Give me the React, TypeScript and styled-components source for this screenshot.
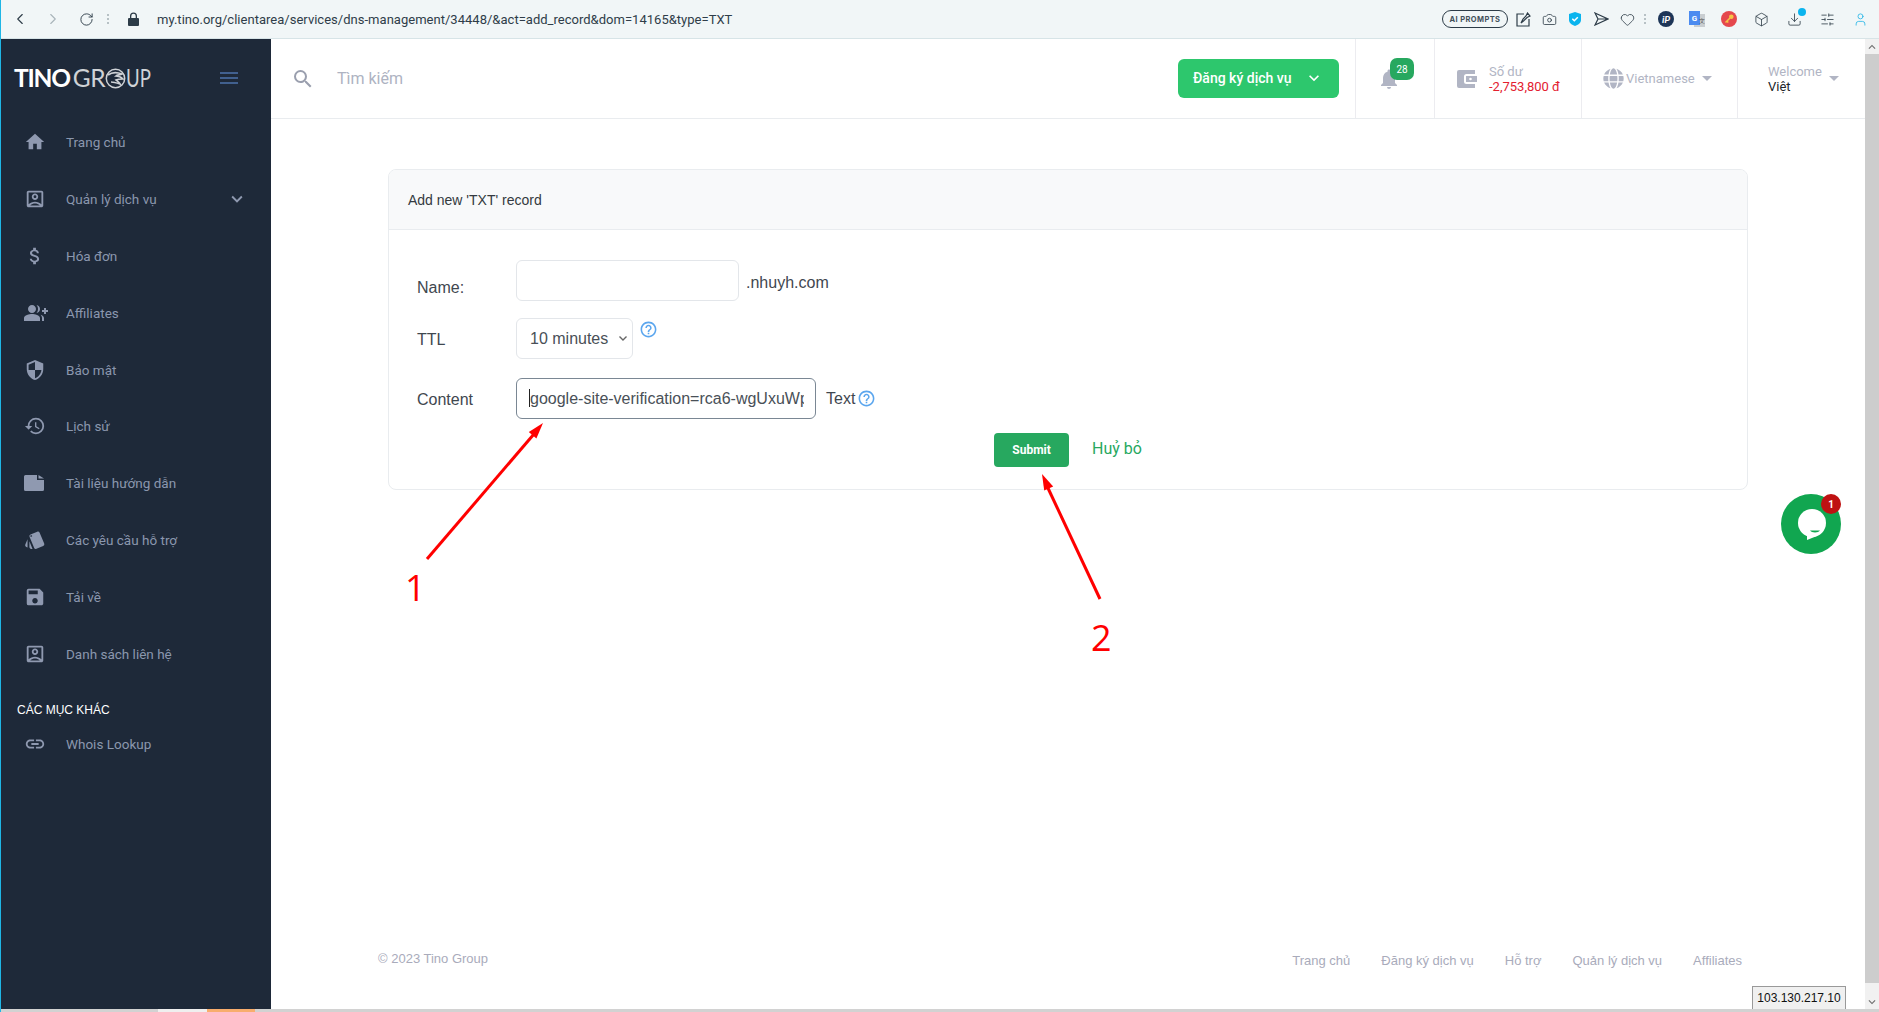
import React from "react";
import styled, { createGlobalStyle } from "styled-components";
import {
  MdHome, MdOutlineAccountBox, MdAttachMoney, MdGroupAdd, MdSecurity, MdHistory, MdStyle, MdSave, MdLink,
  MdSearch, MdNotifications, MdKeyboardArrowDown, MdMenu, MdHelpOutline,
} from "react-icons/md";
import { FaGlobe } from "react-icons/fa";
import { ChevronLeft, ChevronRight, RotateCw, Camera, Heart, Box, Download, SlidersHorizontal, User } from "lucide-react";

const Global = createGlobalStyle`
  html, body { margin: 0; padding: 0; overflow: hidden; background: #fff; }
  * { box-sizing: border-box; }
`;

const Page = styled.div`
  position: relative;
  height: 100vh;
  display: flex;
  flex-direction: column;
  border-left: 1px solid #1fb6e6;
  font-family: "Liberation Sans", Arial, sans-serif;
  overflow: hidden;
`;

/* browser chrome */
const BrowserBar = styled.div`
  height: 39px;
  flex: none;
  background: #f1f6f7;
  border-bottom: 1px solid #d7e4e7;
  display: flex;
  align-items: center;
  padding: 0 2px 0 10px;
  color: #2d3c48;
`;
const NavSlot = styled.span<{ $w: number; $dim?: boolean }>`
  width: ${(p) => p.$w}px;
  display: flex;
  justify-content: center;
  flex: none;
  color: ${(p) => (p.$dim ? "#a9b4ba" : "#2d3c48")};
`;
const DotsV = styled.span`
  display: flex;
  flex-direction: column;
  gap: 2px;
  & > i { width: 2px; height: 2px; background: #b7c1c5; display: block; }
`;
const Url = styled.div`
  margin-left: 12px;
  font: 13px Roboto, sans-serif;
  letter-spacing: 0.02px;
  color: #2f3d49;
  flex: 1;
  white-space: nowrap;
`;
const PromptPill = styled.span`
  width: 66px;
  height: 18px;
  border: 1px solid #2d3c48;
  border-radius: 9px;
  font: 700 7.5px Inter, sans-serif;
  letter-spacing: 0.4px;
  color: #43515c;
  display: flex;
  align-items: center;
  justify-content: center;
  margin-right: 2px;
`;
const ExtSlot = styled.span<{ $w: number; $c?: string }>`
  position: relative;
  width: ${(p) => p.$w}px;
  flex: none;
  display: flex;
  justify-content: center;
  align-items: center;
  color: ${(p) => p.$c || "#2d3c48"};
`;
const BlueDot = styled.i`
  position: absolute;
  left: 20px;
  top: -4px;
  width: 8px;
  height: 8px;
  border-radius: 50%;
  background: #0bb4ee;
`;

/* body */
const Body = styled.div`
  flex: 1;
  min-height: 0;
  display: flex;
`;
const Sidebar = styled.aside`
  width: 270px;
  flex: none;
  background: #1e2939;
  display: flex;
  flex-direction: column;
`;
const LogoRow = styled.div`
  height: 74.6px;
  flex: none;
  display: flex;
  align-items: flex-start;
  padding: 28px 0 0 13px;
  justify-content: space-between;
`;
const Logo = styled.div`
  display: flex;
  align-items: center;
  height: 22px;
  font: 400 24.5px Lato, sans-serif;
  line-height: 22px;
`;
const LogoA = styled.span`
  color: #fff;
  font-weight: 700;
  letter-spacing: -1.2px;
`;
const LogoB = styled.span`
  color: #cfd2d6;
  margin-left: 3px;
  letter-spacing: -0.6px;
`;
const LogoTail = styled.span`
  color: #cfd2d6;
  display: inline-block;
  transform: scaleX(0.76);
  transform-origin: left center;
  margin-right: -8px;
`;
const Burger = styled.span`
  color: #41608f;
  display: flex;
  margin: -1px 30px 0 0;
`;
const MenuItem = styled.a`
  height: 56.875px;
  flex: none;
  display: flex;
  align-items: center;
  font: 13.5px Roboto, sans-serif;
  color: #8b97ae;
`;
const MenuIcon = styled.span`
  width: 65px;
  flex: none;
  padding-left: 23px;
  display: flex;
  color: #8f99b0;
`;
const MenuLabel = styled.span`
  flex: 1;
`;
const MenuCaret = styled.span`
  display: flex;
  margin-right: 23px;
  color: #8f99b0;
`;
const SectionTitle = styled.div`
  height: 33.65px;
  flex: none;
  padding: 20.4px 0 0 16px;
  font: 12px/14px "Liberation Sans", sans-serif;
  color: #fff;
`;

const Main = styled.main`
  flex: 1;
  min-width: 0;
  display: flex;
  flex-direction: column;
`;
const Header = styled.header`
  height: 80px;
  flex: none;
  border-bottom: 1px solid #e9ecef;
  display: flex;
  align-items: stretch;
`;
const SearchBox = styled.div`
  flex: 1;
  display: flex;
  align-items: center;
  padding-left: 20px;
  color: #9a9fae;
  gap: 22px;
`;
const SearchText = styled.span`
  font: 16px Roboto, sans-serif;
  color: #aeb3c2;
`;
const RegisterBtn = styled.button`
  align-self: flex-start;
  margin: 20px 16px 0 0;
  width: 161px;
  height: 39px;
  border: 0;
  border-radius: 6px;
  background: #2dc76d;
  color: #fff;
  font: 500 14px Roboto, sans-serif;
  display: flex;
  align-items: center;
  padding: 0 0 2px 15px;
  gap: 12px;
`;
const HeaderCell = styled.div<{ $w: number; $pl: number }>`
  width: ${(p) => p.$w}px;
  flex: none;
  border-left: 1px solid #ececf0;
  padding-left: ${(p) => p.$pl}px;
  display: flex;
  align-items: center;
`;
const BellWrap = styled.span`
  position: relative;
  display: flex;
  color: #b1b5c4;
  margin-top: 1px;
`;
const BellBadge = styled.span`
  position: absolute;
  left: 13px;
  top: -9px;
  width: 24px;
  height: 22px;
  border-radius: 7px;
  background: #27a85f;
  color: #fff;
  font: 10px Roboto, sans-serif;
  display: flex;
  align-items: center;
  justify-content: center;
`;
const TwoLines = styled.div`
  display: flex;
  flex-direction: column;
  margin-top: 1px;
  font: 13px/15px Roboto, sans-serif;
`;
const WalletText = styled(TwoLines)`
  margin-left: 12px;
`;
const Muted = styled.span`
  color: #b1b5c4;
`;
const Debt = styled.span`
  color: #e3202f;
`;
const Dark = styled.span`
  color: #212529;
`;
const GlobeWrap = styled.span`
  color: #b1b5c4;
  display: flex;
  margin-right: 2px;
`;
const LangText = styled.span`
  font: 13px Roboto, sans-serif;
  color: #b1b5c4;
`;
const Caret = styled.i<{ $ml: number }>`
  width: 0;
  height: 0;
  margin-left: ${(p) => p.$ml}px;
  border-left: 5px solid transparent;
  border-right: 5px solid transparent;
  border-top: 5px solid #b1b5c4;
`;

const Card = styled.section`
  margin: 50px 117px 0 117px;
  border: 1px solid #e9ecef;
  border-radius: 8px;
  overflow: hidden;
`;
const CardHead = styled.div`
  height: 60px;
  background: #f8f9fa;
  border-bottom: 1px solid #e9ecef;
  padding-left: 19px;
  display: flex;
  align-items: center;
  font-size: 14px;
  color: #343a40;
`;
const CardBody = styled.div`
  padding: 30px 28px 22px;
  display: flex;
  flex-direction: column;
`;
const Row = styled.div<{ $mt?: number }>`
  display: flex;
  align-items: center;
  margin-top: ${(p) => p.$mt || 0}px;
  font-size: 16px;
  color: #3f474f;
`;
const Label = styled.label<{ $pt?: number }>`
  width: 99px;
  flex: none;
  padding-top: ${(p) => p.$pt || 0}px;
  font-size: 16px;
  color: #3f474f;
`;
const TextInput = styled.input<{ $w: number; $active?: boolean }>`
  width: ${(p) => p.$w}px;
  height: 41px;
  border: 1px solid ${(p) => (p.$active ? "#7a8794" : "#e3e6ea")};
  border-radius: 6px;
  padding: 0 11px 0 13px;
  font: 16px "Liberation Sans", Arial, sans-serif;
  color: #495057;
  background: #fff;
  outline: none;
`;
const InputWrap = styled.span`
  position: relative;
  display: flex;
`;
const TextCaret = styled.i`
  position: absolute;
  left: 13px;
  top: 11px;
  width: 1px;
  height: 18px;
  background: #222;
`;
const SelectWrap = styled.span`
  position: relative;
  display: flex;
  color: #666;
`;
const SelectBox = styled.select`
  appearance: none;
  width: 117px;
  height: 41px;
  border: 1px solid #e3e6ea;
  border-radius: 6px;
  padding: 0 0 0 13px;
  font: 16px "Liberation Sans", Arial, sans-serif;
  color: #495057;
  background: #fff;
  outline: none;
`;
const SelectChevron = styled.span`
  position: absolute;
  right: 4px;
  top: 13px;
  display: flex;
  pointer-events: none;
`;
const Suffix = styled.span`
  margin: 4px 0 0 7px;
`;
const TextTag = styled.span`
  margin-left: 10px;
`;
const Help = styled.span<{ $top?: boolean; $ml: number }>`
  display: flex;
  color: #5ba6ee;
  margin-left: ${(p) => p.$ml}px;
  align-self: ${(p) => (p.$top ? "flex-start" : "center")};
  margin-top: ${(p) => (p.$top ? 2 : 0)}px;
`;
const Actions = styled.div`
  margin-top: 14px;
  display: flex;
  justify-content: center;
  align-items: center;
  gap: 23px;
`;
const Submit = styled.button`
  width: 75px;
  height: 34px;
  border: 0;
  border-radius: 4px;
  background: #27a85f;
  color: #fff;
  font: 700 12px Roboto, sans-serif;
  padding: 0 0 1px;
`;
const Cancel = styled.a`
  color: #27a85f;
  font: 16px Roboto, sans-serif;
  margin-bottom: 3px;
`;
const Footer = styled.footer`
  margin-top: auto;
  height: 58px;
  padding: 0 123px 0 107px;
  display: flex;
  justify-content: space-between;
  align-items: flex-start;
  font: 13px "Liberation Sans", sans-serif;
  color: #a9abbb;
`;
const FooterLinks = styled.nav`
  display: flex;
  gap: 31px;
  padding-top: 2px;
`;
const Scrollbar = styled.div`
  width: 14px;
  flex: none;
  background: #f1f1f1;
  display: flex;
  flex-direction: column;
  color: #6f6f6f;
`;
const ScrollArrow = styled.span`
  height: 15px;
  flex: none;
  display: flex;
  align-items: center;
  justify-content: center;
`;
const ArrowUp = styled(MdKeyboardArrowDown)`
  transform: rotate(180deg);
`;
const ScrollThumb = styled.div`
  height: 929px;
  flex: none;
  background: #cdcdcd;
`;
const ScrollRest = styled.div`
  flex: 1;
`;
const Strip = styled.div`
  height: 3px;
  flex: none;
  background: #d2d2d2;
  display: flex;
`;
const StripSeg = styled.i<{ $w: number; $c: string }>`
  width: ${(p) => p.$w}px;
  background: ${(p) => p.$c};
`;

/* overlays */
const IpTip = styled.div`
  position: absolute;
  left: 1751px;
  top: 986px;
  width: 94px;
  height: 23px;
  background: #f0f0f0;
  border: 1px solid #999;
  border-bottom: 0;
  font: 12px "Liberation Sans", sans-serif;
  color: #111;
  display: flex;
  align-items: center;
  justify-content: center;
`;
const Chat = styled.div`
  position: absolute;
  left: 1780px;
  top: 494px;
  width: 60px;
  height: 60px;
`;
const ChatBadge = styled.span`
  position: absolute;
  right: 0;
  top: 0;
  width: 20px;
  height: 20px;
  border-radius: 50%;
  background: #bf1212;
  color: #fff;
  font: 700 10px Roboto, sans-serif;
  display: flex;
  align-items: center;
  justify-content: center;
`;
const ArrowLayer = styled.svg`
  position: absolute;
  left: -1px;
  top: 0;
  pointer-events: none;
`;
const Callout = styled.span<{ $x: number; $y: number }>`
  position: absolute;
  left: ${(p) => p.$x}px;
  top: ${(p) => p.$y}px;
  font: 36px/36px "Open Sans", sans-serif;
  color: #f00;
`;

const DocIcon = () => (
  <svg width="20" height="16" viewBox="0 0 20 16" fill="currentColor"><path d="M1.5 0H13v5h7v9.5a1.5 1.5 0 0 1-1.5 1.5h-17A1.5 1.5 0 0 1 0 14.5v-13A1.5 1.5 0 0 1 1.5 0z" /><path d="M14.5 0 20 3.6h-5.5z" /></svg>
);
const WalletIcon = () => (
  <svg width="20" height="18" viewBox="0 0 20 18" fill="#b1b5c4">
    <path fillRule="evenodd" d="M2 0h16v4H9.5A2.5 2.5 0 0 0 7 6.500v5A2.500 2.500 0 0 0 9.500 14H18v4H2a2 2 0 0 1-2-2V2a2 2 0 0 1 2-2z" />
    <path fillRule="evenodd" d="M9 6h11v6H9zm4.500 1.700a1.300 1.300 0 1 0 0 2.600 1.300 1.300 0 0 0 0-2.600z" />
  </svg>
);
const GlobeLogo = () => (
  <svg width="21" height="21" viewBox="0 0 21 21" fill="none" stroke="#cfd2d6" strokeWidth="1.500">
    <circle cx="10.500" cy="10.500" r="9.200" />
    <path d="M3 7c4-3 9-3 14-1-2 1-5 1-6 2 3 0 5 1 7 3-3 0-5 0-7 1 1 1 3 2 4 4-3-1-6-2-9-2" strokeWidth="1.700" />
  </svg>
);
const LockIcon = () => (
  <svg width="11" height="14" viewBox="0 0 11 14" fill="#2d3c48"><path d="M2 6V4a3.500 3.500 0 0 1 7 0v2h1a1 1 0 0 1 1 1v6a1 1 0 0 1-1 1H1a1 1 0 0 1-1-1V7a1 1 0 0 1 1-1zm1.300 0h4.400V4a2.200 2.200 0 0 0-4.400 0z" /></svg>
);
const PinEdit = () => (
  <svg width="15" height="15" viewBox="0 0 15 15" fill="none" stroke="currentColor" strokeWidth="1.200"><path d="M8 2H1v12h12V7" /><path d="M5 11l2-4 3-3 1.500-3L14 4l-3 1.500-3 3z" /></svg>
);
const ShieldBlue = () => (
  <svg width="12" height="14" viewBox="0 0 12 14"><path d="M6 0l6 2v6c0 3-3 5-6 6-3-1-6-3-6-6V2z" fill="#0bb4ee" /><path d="M3.300 6.800l2 2 3.500-3.500" stroke="#fff" strokeWidth="1.500" fill="none" /></svg>
);
const PlaneRight = () => (
  <svg width="15" height="14" viewBox="0 0 15 14" fill="none" stroke="currentColor" strokeWidth="1.200"><path d="M1 1l13 6-13 6 3-6zM4 7h10" /></svg>
);
const IpIcon = () => (
  <svg width="16" height="16" viewBox="0 0 16 16"><circle cx="8" cy="8" r="8" fill="#1d3557" /><text x="8" y="11.500" textAnchor="middle" fontFamily="Lato, sans-serif" fontStyle="italic" fontWeight="700" fontSize="10" fill="#fff">iP</text></svg>
);
const TranslateIcon = () => (
  <svg width="16" height="17" viewBox="0 0 16 17"><rect x="5" y="3" width="11" height="13" fill="#c9ced1" /><rect x="0" y="0" width="11" height="14" fill="#4b8bf0" /><text x="5.500" y="10" textAnchor="middle" fontFamily="Roboto, sans-serif" fontWeight="700" fontSize="8" fill="#fff">G</text><text x="12.500" y="12" textAnchor="middle" fontFamily="Roboto, sans-serif" fontSize="6" fill="#555">文</text></svg>
);
const KeyIcon = () => (
  <svg width="16" height="16" viewBox="0 0 16 16"><circle cx="8" cy="8" r="8" fill="#e5484d" /><circle cx="10.300" cy="5.800" r="2.300" fill="#f6c445" /><path d="M9 7 4.500 11.500M6 10.200l1.300 1.300" stroke="#f6c445" strokeWidth="1.500" /></svg>
);
const ChatIcon = () => (
  <svg width="60" height="60" viewBox="0 0 60 60">
    <circle cx="30" cy="30" r="30" fill="#11a650" />
    <circle cx="31" cy="29" r="14" fill="#fff" />
    <path d="M26 46v-7l10 3z" fill="#fff" />
    <path d="M29 36.500h10c-1.500 2.500-8.500 2.500-10 0z" fill="#11a650" />
  </svg>
);
const ThinChevron = () => (
  <svg width="12" height="14" viewBox="0 0 12 14" fill="none" stroke="currentColor" strokeWidth="1.400"><path d="M2.500 5.500 6 9l3.500-3.500" /></svg>
);

const menu = [
  { icon: <MdHome size={22} />, label: "Trang chủ" },
  { icon: <MdOutlineAccountBox size={22} />, label: "Quản lý dịch vụ", caret: true },
  { icon: <MdAttachMoney size={22} />, label: "Hóa đơn" },
  { icon: <MdGroupAdd size={24} />, label: "Affiliates" },
  { icon: <MdSecurity size={22} />, label: "Bảo mật" },
  { icon: <MdHistory size={22} />, label: "Lịch sử" },
  { icon: <DocIcon />, label: "Tài liệu hướng dẫn" },
  { icon: <MdStyle size={22} />, label: "Các yêu cầu hỗ trợ" },
  { icon: <MdSave size={22} />, label: "Tải về" },
  { icon: <MdOutlineAccountBox size={22} />, label: "Danh sách liên hệ" },
];
const footerLinks = ["Trang chủ", "Đăng ký dịch vụ", "Hỗ trợ", "Quản lý dịch vụ", "Affiliates"];
const url = "my.tino.org/clientarea/services/dns-management/34448/&act=add_record&dom=14165&type=TXT";

export default function App() {
  return (
    <Page>
      <Global />
      <BrowserBar>
        <NavSlot $w={18}><ChevronLeft size={18} strokeWidth={1.500} /></NavSlot>
        <NavSlot $w={48} $dim><ChevronRight size={18} strokeWidth={1.500} /></NavSlot>
        <NavSlot $w={18}><RotateCw size={15} strokeWidth={1.500} /></NavSlot>
        <NavSlot $w={26}><DotsV><i /><i /><i /></DotsV></NavSlot>
        <NavSlot $w={24}><LockIcon /></NavSlot>
        <Url>{url}</Url>
        <PromptPill>AI PROMPTS</PromptPill>
        <ExtSlot $w={26}><PinEdit /></ExtSlot>
        <ExtSlot $w={26}><Camera size={15} strokeWidth={1.300} /></ExtSlot>
        <ExtSlot $w={26}><ShieldBlue /></ExtSlot>
        <ExtSlot $w={26}><PlaneRight /></ExtSlot>
        <ExtSlot $w={26}><Heart size={15} strokeWidth={1.300} /></ExtSlot>
        <ExtSlot $w={10}><DotsV><i /><i /><i /></DotsV></ExtSlot>
        <ExtSlot $w={32}><IpIcon /></ExtSlot>
        <ExtSlot $w={30}><TranslateIcon /></ExtSlot>
        <ExtSlot $w={33}><KeyIcon /></ExtSlot>
        <ExtSlot $w={33}><Box size={15} strokeWidth={1.300} /></ExtSlot>
        <ExtSlot $w={33}><Download size={15} strokeWidth={1.300} /><BlueDot /></ExtSlot>
        <ExtSlot $w={33}><SlidersHorizontal size={15} strokeWidth={1.300} /></ExtSlot>
        <ExtSlot $w={33} $c="#22b4e6"><User size={15} strokeWidth={1.300} /></ExtSlot>
      </BrowserBar>
      <Body>
        <Sidebar>
          <LogoRow>
            <Logo>
              <LogoA>TINO</LogoA>
              <LogoB>GR</LogoB>
              <GlobeLogo />
              <LogoTail>UP</LogoTail>
            </Logo>
            <Burger><MdMenu size={24} /></Burger>
          </LogoRow>
          {menu.map((m) => (
            <MenuItem key={m.label}>
              <MenuIcon>{m.icon}</MenuIcon>
              <MenuLabel>{m.label}</MenuLabel>
              {m.caret && <MenuCaret><MdKeyboardArrowDown size={22} /></MenuCaret>}
            </MenuItem>
          ))}
          <SectionTitle>CÁC MỤC KHÁC</SectionTitle>
          <MenuItem>
            <MenuIcon><MdLink size={22} /></MenuIcon>
            <MenuLabel>Whois Lookup</MenuLabel>
          </MenuItem>
        </Sidebar>
        <Main>
          <Header>
            <SearchBox>
              <MdSearch size={24} />
              <SearchText>Tìm kiếm</SearchText>
            </SearchBox>
            <RegisterBtn>Đăng ký dịch vụ <MdKeyboardArrowDown size={20} /></RegisterBtn>
            <HeaderCell $w={79} $pl={21}>
              <BellWrap>
                <MdNotifications size={24} />
                <BellBadge>28</BellBadge>
              </BellWrap>
            </HeaderCell>
            <HeaderCell $w={147} $pl={22}>
              <WalletIcon />
              <WalletText>
                <Muted>Số dư</Muted>
                <Debt>-2,753,800 đ</Debt>
              </WalletText>
            </HeaderCell>
            <HeaderCell $w={156} $pl={21}>
              <GlobeWrap><FaGlobe size={21} /></GlobeWrap>
              <LangText>Vietnamese</LangText>
              <Caret $ml={7} />
            </HeaderCell>
            <HeaderCell $w={128} $pl={30}>
              <TwoLines>
                <Muted>Welcome</Muted>
                <Dark>Việt</Dark>
              </TwoLines>
              <Caret $ml={7} />
            </HeaderCell>
          </Header>
          <Card>
            <CardHead>Add new 'TXT' record</CardHead>
            <CardBody>
              <Row>
                <Label $pt={14}>Name:</Label>
                <TextInput $w={223} defaultValue="" />
                <Suffix>.nhuyh.com</Suffix>
              </Row>
              <Row $mt={17}>
                <Label $pt={2}>TTL</Label>
                <SelectWrap>
                  <SelectBox defaultValue="10"><option value="10">10 minutes</option></SelectBox>
                  <SelectChevron><ThinChevron /></SelectChevron>
                </SelectWrap>
                <Help $top $ml={6}><MdHelpOutline size={19} /></Help>
              </Row>
              <Row $mt={19}>
                <Label $pt={2}>Content</Label>
                <InputWrap>
                  <TextInput $w={300} $active defaultValue="google-site-verification=rca6-wgUxuWpXkPz3mQ" />
                  <TextCaret />
                </InputWrap>
                <TextTag>Text</TextTag>
                <Help $ml={2}><MdHelpOutline size={19} /></Help>
              </Row>
              <Actions>
                <Submit>Submit</Submit>
                <Cancel>Huỷ bỏ</Cancel>
              </Actions>
            </CardBody>
          </Card>
          <Footer>
            <span>© 2023 Tino Group</span>
            <FooterLinks>
              {footerLinks.map((l) => <span key={l}>{l}</span>)}
            </FooterLinks>
          </Footer>
        </Main>
        <Scrollbar>
          <ScrollArrow><ArrowUp size={14} /></ScrollArrow>
          <ScrollThumb />
          <ScrollRest />
          <ScrollArrow><MdKeyboardArrowDown size={14} /></ScrollArrow>
        </Scrollbar>
      </Body>
      <Strip>
        <StripSeg $w={157} $c="#d2d2d2" />
        <StripSeg $w={49} $c="#efefef" />
        <StripSeg $w={48} $c="#f8ad6d" />
      </Strip>
      <IpTip>103.130.217.10</IpTip>
      <Chat>
        <ChatIcon />
        <ChatBadge>1</ChatBadge>
      </Chat>
      <ArrowLayer width="1879" height="1012" viewBox="0 0 1879 1012">
        <line x1="427" y1="559" x2="534" y2="434" stroke="#f00" strokeWidth="3" />
        <polygon points="543,423 536.400,438.400 528.800,432" fill="#f00" />
        <line x1="1100" y1="599" x2="1047" y2="486" stroke="#f00" strokeWidth="3" />
        <polygon points="1042,474 1053.200,486.400 1044.200,490.600" fill="#f00" />
      </ArrowLayer>
      <Callout $x={404} $y={570}>1</Callout>
      <Callout $x={1090} $y={620}>2</Callout>
    </Page>
  );
}
